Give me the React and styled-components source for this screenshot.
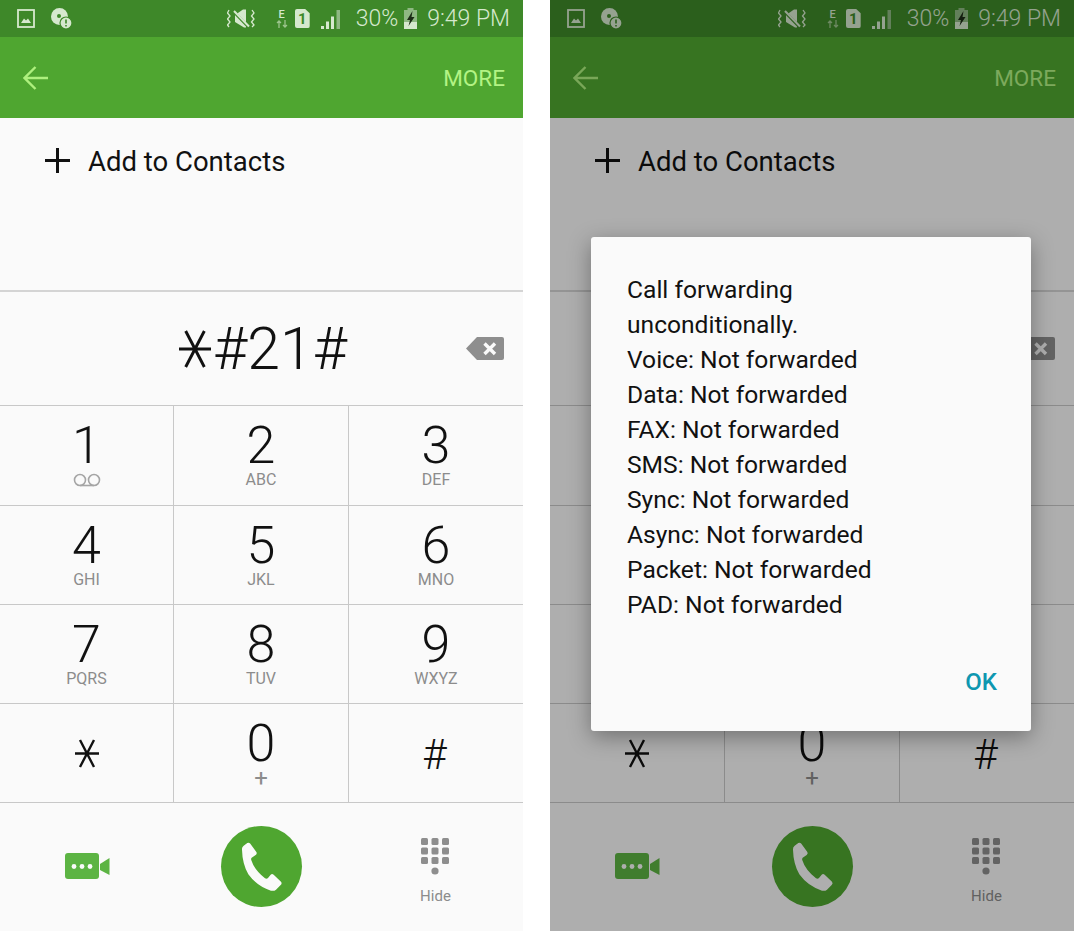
import React from "react";
import styled, { createGlobalStyle } from "styled-components";

const GlobalStyle = createGlobalStyle`
  html, body {
    margin: 0;
    padding: 0;
    background: #fff;
    font-family: Roboto, "Liberation Sans", sans-serif;
  }
  * { box-sizing: border-box; }
`;

const Page = styled.div`
  display: grid;
  grid-template-columns: 523px 524px;
  column-gap: 27px;
  width: 1074px;
  height: 931px;
  overflow: hidden;
`;

const Phone = styled.div`
  position: relative;
  display: flex;
  flex-direction: column;
  height: 931px;
  background: #fafafa;
  overflow: hidden;
`;

const StatusBar = styled.div`
  display: flex;
  justify-content: space-between;
  align-items: center;
  height: 37px;
  padding: 0 13px 0 17px;
  background: #3e8829;
  color: #d6e8ce;
`;

const StatusGroup = styled.div`
  display: flex;
  align-items: center;
  gap: ${(p) => p.$gap}px;
`;

const NetworkGroup = styled(StatusGroup)`
  margin-left: 16px;
`;

const StatusText = styled.span`
  font-size: 23px;
  font-weight: 300;
  line-height: 37px;
  white-space: nowrap;
  margin-left: ${(p) => p.$left || 0}px;
`;

const NetworkType = styled.div`
  display: flex;
  flex-direction: column;
  align-items: center;
  width: 12px;
  font-size: 11px;
  font-weight: 500;
  line-height: 11px;
`;

const SimCard = styled.div`
  display: flex;
  justify-content: center;
  align-items: center;
  width: 15px;
  height: 19px;
  background: #d6e8ce;
  border-radius: 2px;
  color: #3e8829;
  font-size: 15px;
  font-weight: 700;
  clip-path: polygon(0 0, 70% 0, 100% 22%, 100% 100%, 0 100%);
`;

const AppBar = styled.div`
  display: flex;
  justify-content: space-between;
  align-items: center;
  height: 81px;
  padding: 0 18px 0 23px;
  background: #4fa630;
`;

const MoreButton = styled.span`
  color: #b3f384;
  font-size: 22.5px;
`;

const AddRow = styled.div`
  display: flex;
  align-items: flex-start;
  gap: 18px;
  height: 172px;
  padding: 30px 45px 0;
  color: #111;
  font-size: 27.5px;
  line-height: 36px;
`;

const AddLabel = styled.span`
  margin-top: -4px;
`;

const NumberRow = styled.div`
  display: grid;
  grid-template-columns: 1fr auto 1fr;
  align-items: center;
  height: 116px;
  border-top: 2px solid #d4d4d4;
  border-bottom: 1px solid #c8c8c8;
`;

const NumberText = styled.div`
  grid-column: 2;
  display: flex;
  align-items: center;
  gap: 2px;
  padding-left: 3px;
  color: #111;
  font-size: 59px;
  font-weight: 300;
  line-height: 70px;
`;

const DeleteSlot = styled.div`
  display: flex;
  justify-content: flex-end;
  padding-right: 19px;
`;

const KeyGrid = styled.div`
  display: grid;
  grid-template-columns: ${(p) => p.$firstCol}px 175px 1fr;
  grid-template-rows: 100px repeat(3, 99px);
`;

const Key = styled.div`
  display: flex;
  flex-direction: column;
  align-items: center;
  justify-content: ${(p) => (p.$center ? "center" : "flex-start")};
  padding-top: ${(p) => (p.$center ? 0 : 14)}px;
  border-bottom: 1px solid #c8c8c8;
  border-left: ${(p) => (p.$first ? "none" : "1px solid #c8c8c8")};
`;

const Digit = styled.div`
  color: #111;
  font-size: ${(p) => (p.$small ? 42 : 52)}px;
  font-weight: 300;
  line-height: ${(p) => (p.$small ? 42 : 52)}px;
  margin: ${(p) => (p.$small ? "4px 3px 0 0" : 0)};
`;

const Letters = styled.div`
  display: flex;
  align-items: center;
  height: 16px;
  color: #8c8c8c;
  font-size: ${(p) => (p.$big ? 24 : 16)}px;
  line-height: 16px;
`;

const BottomBar = styled.div`
  display: grid;
  grid-template-columns: 175px ${(p) => p.$firstCol}px 1fr;
  justify-items: center;
  align-items: center;
  flex: 1;
  padding-bottom: 2px;
`;

const CallButton = styled.div`
  display: flex;
  width: 81px;
  height: 81px;
  border-radius: 50%;
  background: #4fa630;
`;

const HideButton = styled.div`
  display: flex;
  flex-direction: column;
  align-items: center;
  gap: 11px;
  padding-top: 11px;
  color: #8c8c8c;
  font-size: 15px;
  line-height: 18px;
`;

const Overlay = styled.div`
  position: absolute;
  inset: 0;
  padding: 237px 0 0 41px;
  background: rgba(0, 0, 0, 0.3);
`;

const Dialog = styled.div`
  display: flex;
  flex-direction: column;
  width: 440px;
  height: 494px;
  padding: 35px 34px 0 36px;
  background: #fafafa;
  border-radius: 3px;
  box-shadow: 0 6px 22px rgba(0, 0, 0, 0.35);
`;

const DialogText = styled.div`
  color: #111;
  font-size: 24.6px;
  line-height: 35px;
`;

const DialogAction = styled.div`
  align-self: flex-end;
  margin-top: 43px;
  color: #0e97b0;
  font-size: 24px;
  font-weight: 500;
  line-height: 35px;
`;

const StarIcon = ({ w, h, sw }) => (
  <svg width={w} height={h} viewBox="0 0 24 29">
    <path d="M0 14.5H24M5 1L19 28M19 1L5 28" stroke="#111" strokeWidth={sw} fill="none" />
  </svg>
);

const VoicemailIcon = () => (
  <svg width="30" height="16" viewBox="0 0 30 16">
    <circle cx="8" cy="8" r="5.5" fill="none" stroke="#a5a5a5" strokeWidth="1.6" />
    <circle cx="22" cy="8" r="5.5" fill="none" stroke="#a5a5a5" strokeWidth="1.6" />
    <path d="M8 13.5H22" stroke="#a5a5a5" strokeWidth="1.6" />
  </svg>
);

const BackArrow = () => (
  <svg width="25" height="24" viewBox="0 0 25 24">
    <path d="M25 12H2M12.5 1L1.5 12L12.5 23" fill="none" stroke="#aef07e" strokeWidth="2.4" />
  </svg>
);

const PlusIcon = () => (
  <svg width="25" height="25" viewBox="0 0 25 25">
    <path d="M12.5 0V25M0 12.5H25" stroke="#111" strokeWidth="3" />
  </svg>
);

const DeleteIcon = () => (
  <svg width="38" height="23" viewBox="0 0 38 23">
    <path d="M11 0H36a2 2 0 0 1 2 2V21a2 2 0 0 1-2 2H11L0 11.5Z" fill="#8e8e8e" />
    <path d="M18.5 6.5L29 17M29 6.5L18.5 17" stroke="#fafafa" strokeWidth="3.4" />
  </svg>
);

const VideoIcon = () => (
  <svg width="45" height="28" viewBox="0 0 45 28">
    <rect x="0" y="1" width="34" height="26" rx="3" fill="#5cb443" />
    <path d="M35 12L44.5 6V23L35 18Z" fill="#5cb443" />
    <circle cx="9" cy="14.5" r="2.4" fill="#fafafa" />
    <circle cx="17" cy="14.5" r="2.4" fill="#fafafa" />
    <circle cx="25" cy="14.5" r="2.4" fill="#fafafa" />
  </svg>
);

const HandsetIcon = () => (
  <svg width="81" height="81" viewBox="18 12 243 243">
    <path
      d="M81 83Q80 76 86 71L97 63Q102 60 106 65L124 90Q127 95 122 99L110 107Q107 110 109 115Q118 144 150 169Q155 172 159 168L167 158Q171 154 176 158L198 179Q202 184 197 189L183 203Q177 208 168 206Q126 193 100 157Q82 125 81 83Z"
      fill="#fafafa"
    />
  </svg>
);

const KeypadIcon = () => (
  <svg width="28" height="38" viewBox="0 0 28 38">
    <g fill="#8e8e8e">
      {[0, 9.5, 19].map((y) =>
        [0, 10.5, 21].map((x) => <rect key={`${x}-${y}`} x={x} y={y} width="7" height="7" rx="1.5" />)
      )}
      <circle cx="14" cy="33" r="3.6" />
    </g>
  </svg>
);

const ImageIcon = () => (
  <svg width="18" height="19" viewBox="0 0 18 19">
    <rect x="1" y="1" width="16" height="17" fill="none" stroke="#d6e8ce" strokeWidth="1.8" />
    <path d="M4 14L7 9.5L9 11.5L11 9.5L14 14Z" fill="#d6e8ce" />
  </svg>
);

const DiscAlertIcon = () => (
  <svg width="21" height="21" viewBox="0 0 21 21">
    <circle cx="8.5" cy="8.5" r="8.5" fill="#d6e8ce" />
    <circle cx="8" cy="8" r="2" fill="#3e8829" />
    <circle cx="15" cy="15" r="6" fill="#d6e8ce" stroke="#3e8829" strokeWidth="1.2" />
    <path d="M15 11.5V15.5M15 17V18.5" stroke="#3e8829" strokeWidth="1.6" />
  </svg>
);

const MuteVibrateIcon = () => (
  <svg width="28" height="21" viewBox="0 0 28 21">
    <path d="M8 7L16 1.5H19V19.5H17L8 14Z" fill="#d6e8ce" />
    <path d="M6 3L21 18.5" stroke="#3e8829" strokeWidth="3" />
    <path d="M7 3L22 18.5" stroke="#d6e8ce" strokeWidth="2" />
    <path
      d="M2 2L0.5 5L3 8L0.5 11L3 14L0.5 17L2 19M25 2L27 5L24.5 8L27 11L24.5 14L27 17L25 19"
      fill="none"
      stroke="#d6e8ce"
      strokeWidth="1.3"
    />
  </svg>
);

const DataArrows = () => (
  <svg width="12" height="8" viewBox="0 0 12 8">
    <path d="M3 8V1M1 3L3 1L5 3M9 0V7M7 5L9 7L11 5" fill="none" stroke="#9cc48d" strokeWidth="1.3" />
  </svg>
);

const SignalIcon = () => (
  <svg width="24" height="20" viewBox="-4 0 24 20">
    <path d="M0 17H3V20H0ZM5 12.5H8V20H5ZM10 7.5H13V20H10Z" fill="#d6e8ce" />
    <path d="M15.5 1H19V20H15.5Z" fill="#8fb883" />
  </svg>
);

const BatteryIcon = () => (
  <svg width="15" height="21" viewBox="0 0 15 21">
    <path d="M4.5 0H10.5V2H14V21H1V2H4.5Z" fill="#8fb883" />
    <path d="M1 14H14V21H1Z" fill="#d6e8ce" />
    <path d="M9.5 3L4 12H7L5.5 18L11.5 9H8.5Z" fill="#1c2b16" />
  </svg>
);

const keys = [
  { digit: "1", voicemail: true },
  { digit: "2", letters: "ABC" },
  { digit: "3", letters: "DEF" },
  { digit: "4", letters: "GHI" },
  { digit: "5", letters: "JKL" },
  { digit: "6", letters: "MNO" },
  { digit: "7", letters: "PQRS" },
  { digit: "8", letters: "TUV" },
  { digit: "9", letters: "WXYZ" },
  { star: true },
  { digit: "0", letters: "+", big: true },
  { digit: "#", center: true },
];

const forwardLines = [
  "Call forwarding",
  "unconditionally.",
  "Voice: Not forwarded",
  "Data: Not forwarded",
  "FAX: Not forwarded",
  "SMS: Not forwarded",
  "Sync: Not forwarded",
  "Async: Not forwarded",
  "Packet: Not forwarded",
  "PAD: Not forwarded",
];

function Dialer({ firstCol, children }) {
  return (
    <Phone>
      <StatusBar>
        <StatusGroup $gap={16}>
          <ImageIcon />
          <DiscAlertIcon />
        </StatusGroup>
        <StatusGroup $gap={5}>
          <MuteVibrateIcon />
          <NetworkGroup $gap={7}>
            <NetworkType>
              E
              <DataArrows />
            </NetworkType>
            <SimCard>1</SimCard>
            <SignalIcon />
          </NetworkGroup>
          <StatusText $left={10}>30%</StatusText>
          <BatteryIcon />
          <StatusText $left={4}>9:49 PM</StatusText>
        </StatusGroup>
      </StatusBar>
      <AppBar>
        <BackArrow />
        <MoreButton>MORE</MoreButton>
      </AppBar>
      <AddRow>
        <PlusIcon />
        <AddLabel>Add to Contacts</AddLabel>
      </AddRow>
      <NumberRow>
        <NumberText>
          <StarIcon w={32} h={40} sw={2.2} />
          #21#
        </NumberText>
        <DeleteSlot>
          <DeleteIcon />
        </DeleteSlot>
      </NumberRow>
      <KeyGrid $firstCol={firstCol}>
        {keys.map((key, i) => (
          <Key key={i} $first={i % 3 === 0} $center={key.star || key.center}>
            {key.star ? (
              <StarIcon w={24} h={29} sw={2.4} />
            ) : (
              <Digit $small={key.center}>{key.digit}</Digit>
            )}
            {key.voicemail && (
              <Letters>
                <VoicemailIcon />
              </Letters>
            )}
            {key.letters && <Letters $big={key.big}>{key.letters}</Letters>}
          </Key>
        ))}
      </KeyGrid>
      <BottomBar $firstCol={firstCol}>
        <VideoIcon />
        <CallButton>
          <HandsetIcon />
        </CallButton>
        <HideButton>
          <KeypadIcon />
          Hide
        </HideButton>
      </BottomBar>
      {children}
    </Phone>
  );
}

export default function App() {
  return (
    <>
      <GlobalStyle />
      <Page>
        <Dialer firstCol={173} />
        <Dialer firstCol={174}>
          <Overlay>
            <Dialog>
              <DialogText>
                {forwardLines.map((line) => (
                  <div key={line}>{line}</div>
                ))}
              </DialogText>
              <DialogAction>OK</DialogAction>
            </Dialog>
          </Overlay>
        </Dialer>
      </Page>
    </>
  );
}
